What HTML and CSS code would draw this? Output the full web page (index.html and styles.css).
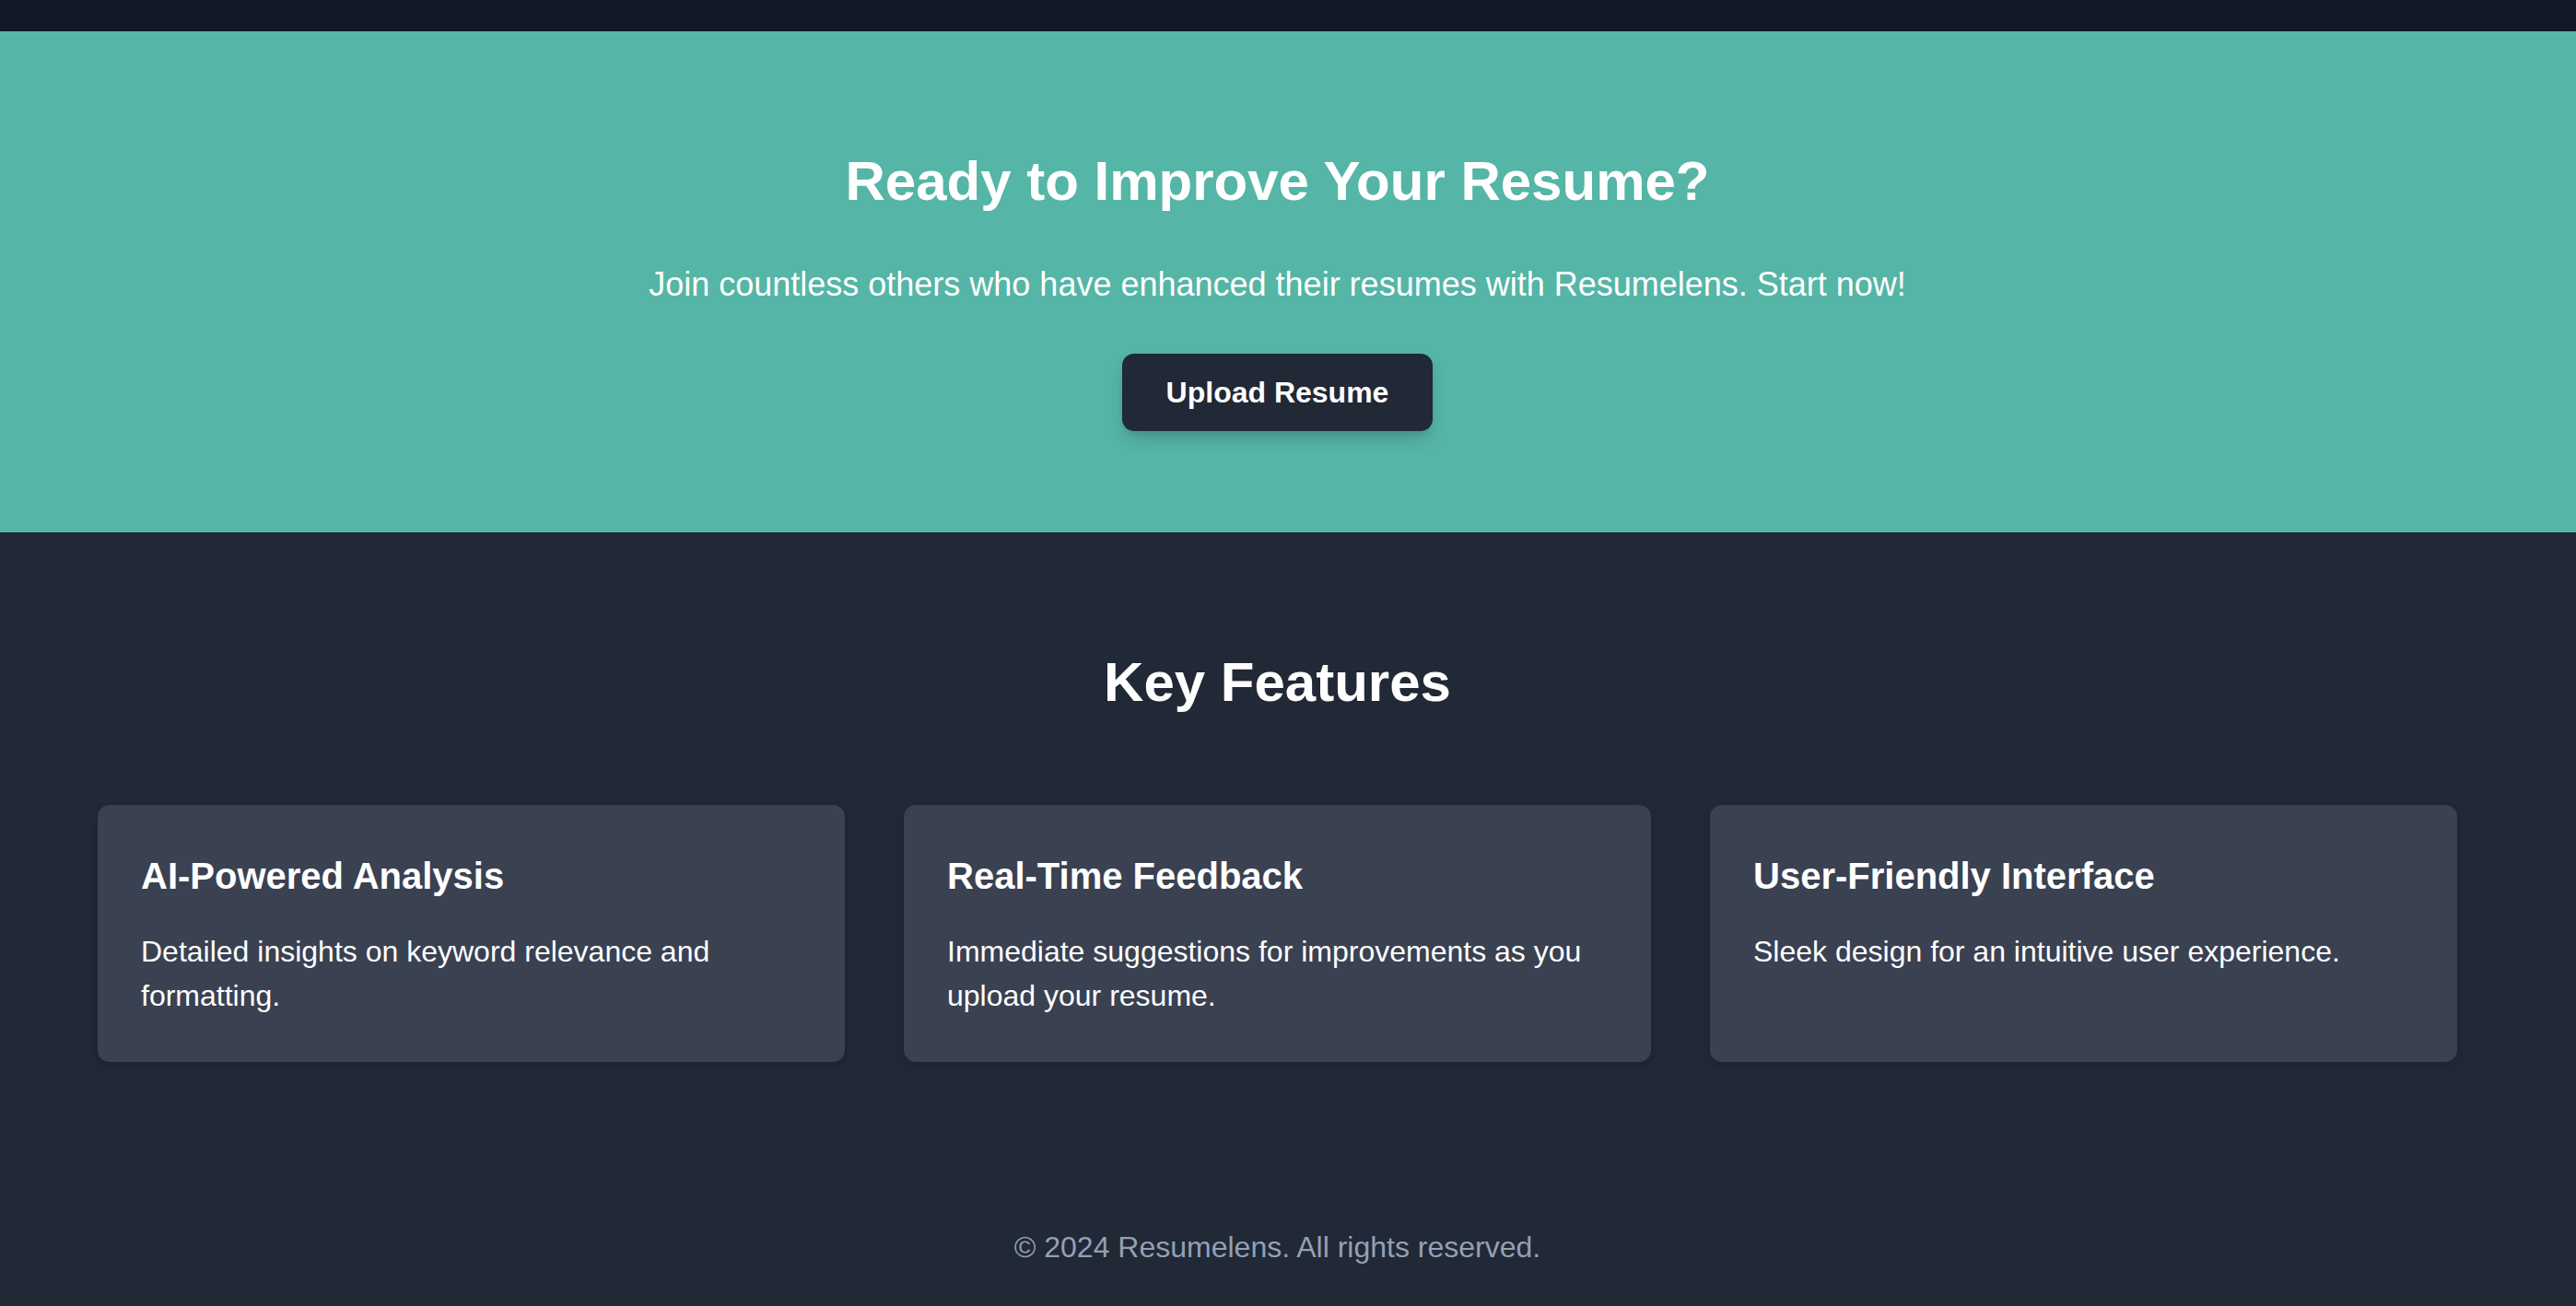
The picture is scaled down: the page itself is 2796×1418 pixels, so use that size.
FILE: index.html
```html
<!DOCTYPE html>
<html lang="en">
<head>
<meta charset="utf-8">
<title>Resumelens</title>
<link rel="stylesheet" href="styles.css">
</head>
<body>
  <div class="topbar"></div>
  <section class="cta">
    <div class="inner">
      <h2 class="cta-title">Ready to Improve Your Resume?</h2>
      <p class="cta-text">Join countless others who have enhanced their resumes with Resumelens. Start now!</p>
      <button class="cta-btn">Upload Resume</button>
    </div>
  </section>
  <section class="features">
    <div class="inner">
      <h2 class="features-title">Key Features</h2>
      <div class="grid">
        <div class="card">
          <h3 class="card-title">AI-Powered Analysis</h3>
          <p class="card-text">Detailed insights on keyword relevance and formatting.</p>
        </div>
        <div class="card">
          <h3 class="card-title">Real-Time Feedback</h3>
          <p class="card-text">Immediate suggestions for improvements as you upload your resume.</p>
        </div>
        <div class="card">
          <h3 class="card-title">User-Friendly Interface</h3>
          <p class="card-text">Sleek design for an intuitive user experience.</p>
        </div>
      </div>
    </div>
    <footer class="footer">
      <p class="footer-text">© 2024 Resumelens. All rights reserved.</p>
    </footer>
  </section>
</body>
</html>
```

FILE: styles.css
```css
* { box-sizing: border-box; }
html, body {
  margin: 0;
  padding: 0;
  height: 1418px;
  overflow: hidden;
}
body {
  font-family: "Liberation Sans", Arial, sans-serif;
  background: #212836;
  color: #ffffff;
}
.topbar {
  height: 34px;
  background: #111827;
}
.cta {
  background: #55b5a6;
  height: 544px;
  padding: 129.5px 129px 0 106px;
}
.inner {
  display: flex;
  flex-direction: column;
  align-items: center;
}
.cta-title {
  margin: 0 0 55px;
  font-size: 60px;
  line-height: 66.7px;
  font-weight: 700;
  text-align: center;
}
.cta-text {
  margin: 0 0 51px;
  font-size: 36px;
  line-height: 48px;
  text-align: center;
}
.cta-btn {
  font-family: inherit;
  border: 0;
  background: #212836;
  color: #ffffff;
  font-size: 32px;
  font-weight: 700;
  line-height: 44px;
  padding: 20px 48px;
  border-radius: 13px;
  box-shadow: 0 10px 18px -3px rgba(0, 0, 0, 0.18), 0 4px 8px -4px rgba(0, 0, 0, 0.12);
}
.features {
  background: #212836;
  padding: 129.5px 129px 0 106px;
  height: 840px;
}
.features-title {
  margin: 0 0 99.8px;
  font-size: 60px;
  line-height: 66.7px;
  font-weight: 700;
  text-align: center;
}
.grid {
  width: 100%;
  display: grid;
  grid-template-columns: repeat(3, 1fr);
  gap: 64px;
}
.card {
  background: #3a4151;
  border-radius: 13px;
  padding: 50.5px 47px 0;
  height: 279px;
  box-shadow: 0 4px 10px rgba(0, 0, 0, 0.12);
}
.card-title {
  margin: 0 0 30.8px;
  font-size: 40px;
  line-height: 53.3px;
  font-weight: 700;
}
.card-text {
  margin: 0;
  font-size: 32px;
  line-height: 48px;
}
.footer {
  padding-top: 177px;
  text-align: center;
}
.footer-text {
  margin: 0;
  font-size: 32px;
  line-height: 48px;
  color: #94a0b4;
}
```
